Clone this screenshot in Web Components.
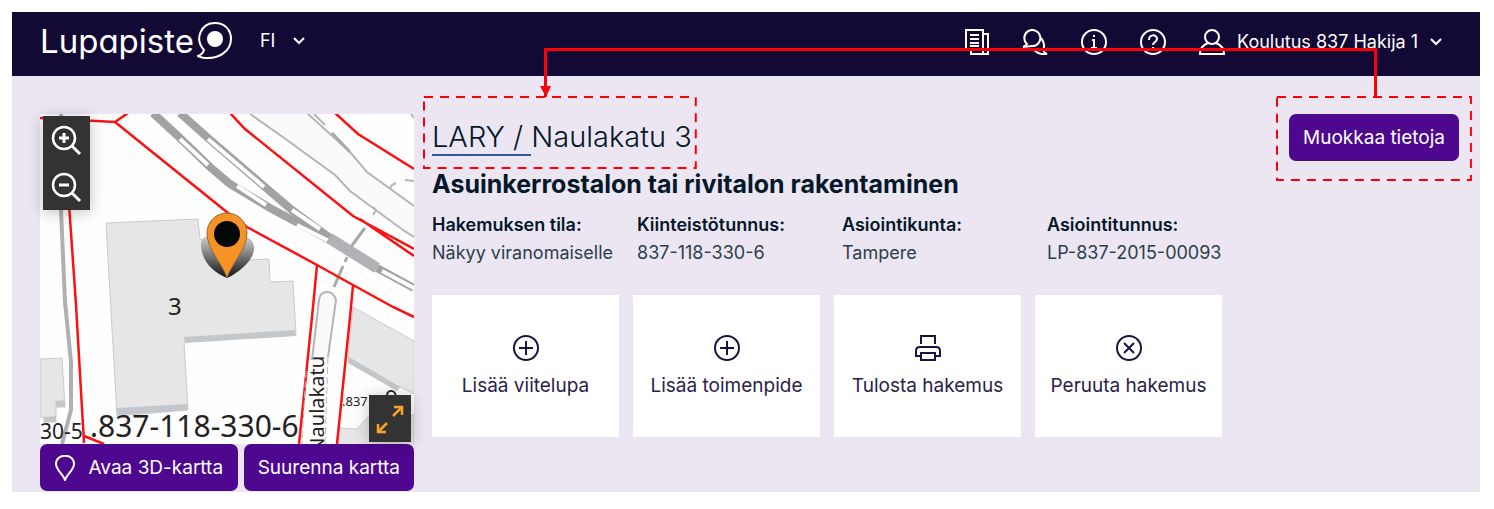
<!DOCTYPE html>
<html lang="fi">
<head>
<meta charset="utf-8">
<title>Lupapiste</title>
<style>
    body {
        margin: 0;
        padding: 12px 14px 18px 12px;
        background: #fff;
        font-family: Inter, "Liberation Sans", sans-serif;
        font-size: 18px;
        line-height: 28px;
        color: #04182a;
        --navy: #120a35;
        --violet: #4e078f;
        --lilac: #ece6f2;
        --mark: #fb0007;
    }
</style>
</head>
<body>
<lp-page></lp-page>

<script>
const define = (name, html) => {
    const template = document.createElement("template");
    template.innerHTML = html;
    customElements.define(name, class extends HTMLElement {
        constructor() {
            super();
            this.attachShadow({ mode: "open" });
            this.shadowRoot.appendChild(template.content.cloneNode(true));
        }
    });
};

const icons = {
    chevron: [12, 8, '<path d="M1 1l5 5 5-5" stroke-width="2"/>'],
    news: [24, 26, '<path d="M1 1h17v20H1zM18 5h5v20H6v-4M18 21v4M5 6h9M5 10h9M5 14h9M5 17h9" stroke-width="2"/>'],
    chat: [26, 26, '<path d="M5 15A8 8 0 1 1 10 17L1 18Q4 17 5 15zM19 9q5 6 2 12 1 3 4 4-8 1-13-4" stroke-width="2"/>'],
    info: [26, 26, '<circle cx="13" cy="13" r="12" stroke-width="2"/><path d="M11 11h2v8M10 19h6M13 6v2" stroke-width="2"/>'],
    help: [26, 26, '<circle cx="13" cy="13" r="12" stroke-width="2"/><path d="M9 11c0-6 8-6 8-1 0 3-4 3-4 6M13 18v2" stroke-width="2"/>'],
    user: [26, 26, '<circle cx="13" cy="8" r="7" stroke-width="2"/><path d="M9 14c-5 2-8 6-8 11h24c0-5-3-9-8-11" stroke-width="2"/>'],
    plus: [26, 26, '<circle cx="13" cy="13" r="12" stroke-width="2"/><path d="M13 6v14M6 13h14" stroke-width="2"/>'],
    cancel: [26, 26, '<circle cx="13" cy="13" r="12" stroke-width="2"/><path d="M8 8l10 10M18 8L8 18" stroke-width="2"/>'],
    print: [26, 26, '<path d="M6 9V1h14v8M6 21H1v-5q0-4 4-4h16q4 0 4 4v5h-5M6 18h14v7H6z" stroke-width="2"/>'],
    pin: [20, 26, '<path d="M10 25C8 19 1 15 1 9c0-11 18-11 18 0 0 6-7 10-9 16z" stroke-width="2"/>'],
    zoomin: [47, 47, '<circle cx="21" cy="22" r="11" stroke-width="2.5"/><path d="M29 30l8 8M21 17v10M16 22h10" stroke-width="3"/>'],
    zoomout: [47, 47, '<circle cx="21" cy="22" r="11" stroke-width="2.5"/><path d="M29 30l8 8M16 22h10" stroke-width="3"/>'],
    expand: [42, 47, '<path d="M24 21l9-9M25 12h8v8M18 28l-9 9M9 29v8h8" stroke-width="2.5"/>']
};

class LpIcon extends HTMLElement {
    constructor() {
        super();
        this.attachShadow({ mode: "open" });
    }
    connectedCallback() {
        const [w, h, body] = icons[this.getAttribute("name")];
        this.shadowRoot.innerHTML = `
            <style>:host { display: inline-flex; flex: none; } svg { fill: none; stroke: currentColor; }</style>
            <svg width="${w}" height="${h}" viewBox="0 0 ${w} ${h}" aria-hidden="true">${body}</svg>`;
    }
}
customElements.define("lp-icon", LpIcon);

define("lp-button", `
<style>
    :host { display: flex; }
    button {
        flex: 1;
        display: flex;
        align-items: center;
        justify-content: center;
        gap: 14px;
        height: 47px;
        padding: 0 14px;
        border: 0;
        border-radius: 7px;
        background: var(--violet);
        color: #fff;
        font: inherit;
        font-size: 19px;
        white-space: nowrap;
        cursor: pointer;
    }
</style>
<button type="button"><slot></slot></button>
`);

define("lp-logo", `
<style>
    :host { display: block; }
    a {
        display: flex;
        gap: 3px;
        color: #fff;
        text-decoration: none;
        font-size: 33px;
        line-height: 40px;
        font-feature-settings: "cv11", "ss03";
    }
    svg { flex: none; }
</style>
<a href="#">Lupapiste
    <svg width="35" height="38" viewBox="0 0 35 38" aria-hidden="true">
        <path d="M7 29C-3 18 4 2 18 2c10 0 16 7 16 16 0 12-12 20-26 19-3 0-5-1-7-2 3-1 5-3 6-6z" fill="none" stroke="#fff" stroke-width="2"/>
        <circle cx="18" cy="18" r="8" fill="#fff"/>
    </svg>
</a>
`);

define("lp-header", `
<style>
    :host {
        display: flex;
        align-items: center;
        justify-content: space-between;
        height: 64px;
        padding: 0 38px 0 28px;
        background: var(--navy);
        color: #fff;
    }
    .side, nav { display: flex; align-items: center; }
    .side { gap: 28px; padding-bottom: 6px; }
    nav { gap: 33px; padding-bottom: 4px; }
    button {
        display: flex;
        align-items: center;
        gap: 12px;
        padding: 0;
        border: 0;
        background: none;
        color: inherit;
        font: inherit;
        cursor: pointer;
    }
    .lang { gap: 18px; }
    a { display: flex; color: inherit; }
</style>
<div class="side">
    <lp-logo></lp-logo>
    <button class="lang" type="button">FI <lp-icon name="chevron"></lp-icon></button>
</div>
<nav>
    <a href="#" aria-label="Uutiset"><lp-icon name="news"></lp-icon></a>
    <a href="#" aria-label="Keskustelu"><lp-icon name="chat"></lp-icon></a>
    <a href="#" aria-label="Tietoa"><lp-icon name="info"></lp-icon></a>
    <a href="#" aria-label="Ohje"><lp-icon name="help"></lp-icon></a>
    <button type="button"><lp-icon name="user"></lp-icon>Koulutus 837 Hakija 1<lp-icon name="chevron"></lp-icon></button>
</nav>
`);

define("lp-map", `
<style>
    :host { display: block; }
    .view { position: relative; height: 330px; background: #fefefe; }
    .map { display: block; width: 100%; height: 100%; font-family: "Noto Sans", sans-serif; }
    .tools {
        position: absolute;
        left: 3px;
        top: 2px;
        display: flex;
        flex-direction: column;
        box-shadow: 0 2px 16px rgba(0, 0, 0, 0.25);
    }
    .expand {
        position: absolute;
        right: 3px;
        bottom: 2px;
        box-shadow: 0 2px 16px rgba(0, 0, 0, 0.25);
    }
    .view button {
        display: flex;
        padding: 0;
        border: 0;
        background: #333;
        color: #fff;
        cursor: pointer;
    }
    .view .expand { color: #f5a32c; }
    .actions { display: flex; gap: 6px; }
    lp-button:first-child { flex: 1; }
</style>
<div class="view">
    <svg class="map" viewBox="0 0 374 330" preserveAspectRatio="xMidYMid slice" fill="none">
        <defs>
            <linearGradient id="shade" x1="0" y1="0" x2="0" y2="1">
                <stop offset="0" stop-color="#ddd"/>
                <stop offset="1" stop-color="#111"/>
            </linearGradient>
        </defs>
        <!-- street areas -->
        <path d="M210 0L247 26 295 61 310 77 333 94 363 116 374 123V92L327 58 310 38 268 0z" fill="#fafafa"/>
        <g stroke="#b5b5b8" stroke-width="2">
            <path d="M210 0L247 26 295 61 310 77 333 94 363 116 374 123M268 0L310 38 327 58 374 92M274 0L285 11M350 75l2-4 4-2M365 66l9 1M333 101l3-5-3-3M371 0l3 4"/>
            <path d="M272 246l7-60q1-8 8-8t9 8l-8 57" fill="#fafafa"/>
        </g>
        <path d="M292 19l18 19M325 114l-15 20M307 143l-2 5M303 152l-9 21" stroke="#a9a9ac" stroke-width="3"/>
        <!-- buildings -->
        <g fill="#e6e6e6" stroke="#c8cacc">
            <path d="M66 109l92-4 2 20 49 21 20-1 1 23 23-1 3 54-112 7 4 68-71 6z"/>
            <path d="M0 245l22-1 3 49h-9v15H4v-5H0z"/>
            <path d="M313 193l61 34v53l-14-7-52-30z"/>
            <path d="M300 314l17 1 13-14h44v30h-78z"/>
        </g>
        <path d="M144 223l111-7 1 6-111 7zM77 294l70-4 1 6-71 5zM308 243l52 30-3 4-49-28zM15 287l10-1v7h-9zM4 303l12-1v6H4z" fill="#c3c7ca"/>
        <!-- railway -->
        <path d="M21 0v96l4 92 6 60v48l-9 34" stroke="#b0b0b4" stroke-width="4"/>
        <path d="M113-1l27 25 30 29 20 17 40 24 60 32M140-1l28 25 57 49 27 23 38 28M337 154l37 20" stroke="#a2a2a3" stroke-width="8"/>
        <path d="M140 25l28 26M197 72l29 19M257 111l32 16M168 25l56 48M252 96l28 19M342 157l34 18" stroke="#fff" stroke-width="4"/>
        <path d="M289 124l48 30" stroke="#b1b1b6" stroke-width="11"/>
        <!-- plot borders -->
        <path d="M0 4l75 4L88-1M75 8l113 91 19 14 70 38 36 20 40 22 21 10M190-1l15 16 108 87 61 33M320 105l54 37M295-1l23 21 56 35M29 90l7 101 8 138M44 322l20 8M277 151l-4 42-14 137M313 171l-2 22-14 137" stroke="#fe1010" stroke-width="2.5"/>
        <path d="M266 257l-4 73M288 243l-3 87" stroke="#bbb" stroke-dasharray="7 3"/>
        <g fill="#222">
            <text x="128" y="201" font-size="24">3</text>
            <text x="0" y="325" font-size="21">30-5</text>
            <text x="50" y="323" font-size="30">.837-118-330-6</text>
            <text x="302" y="292" font-size="13">.837</text>
            <text x="345" y="292" font-size="22">9</text>
            <text transform="translate(284 242) rotate(-90)" text-anchor="end" font-size="20">Naulakatu</text>
        </g>
        <path d="M161 130c0-10 12-10 26-10s27 2 27 14-14 24-27 30c-15-6-26-18-26-34z" fill="url(#shade)"/>
        <path d="M187 164c-4-14-20-28-20-45a20 20 0 0 1 40 0c0 17-16 31-20 45z" fill="#f79326" stroke="#8a6a45"/>
        <circle cx="187" cy="120" r="13" fill="#020806"/>
    </svg>
    <div class="tools">
        <button type="button" aria-label="Lähennä"><lp-icon name="zoomin"></lp-icon></button>
        <button type="button" aria-label="Loitonna"><lp-icon name="zoomout"></lp-icon></button>
    </div>
    <button class="expand" type="button" aria-label="Koko näyttö"><lp-icon name="expand"></lp-icon></button>
</div>
<div class="actions">
    <lp-button><lp-icon name="pin"></lp-icon>Avaa 3D-kartta</lp-button>
    <lp-button>Suurenna kartta</lp-button>
</div>
`);

// dashed frame drawn around whatever is slotted in
define("lp-frame", `
<style>
    :host { display: block; position: relative; width: fit-content; }
    svg {
        position: absolute;
        left: var(--frame-left, -12px);
        top: -17px;
        width: calc(100% + var(--frame-extra, 24px));
        height: calc(100% + var(--frame-tall, 36px));
        overflow: visible;
        pointer-events: none;
    }
    rect { fill: none; stroke: var(--mark); stroke-width: 2; stroke-dasharray: 9 7; }
</style>
<slot></slot>
<svg aria-hidden="true"><rect width="100%" height="100%"/></svg>
`);

define("lp-fact", `
<style>
    :host { display: block; white-space: nowrap; }
    dl, dt, dd { margin: 0; }
    dt { font-weight: 600; }
    dd { color: #2d3d4b; }
</style>
<dl>
    <dt><slot name="label"></slot></dt>
    <dd><slot></slot></dd>
</dl>
`);

define("lp-card", `
<style>
    :host { display: block; }
    button {
        display: flex;
        flex-direction: column;
        align-items: center;
        gap: 11px;
        width: 100%;
        padding: 40px 0 37px;
        border: 0;
        background: #fff;
        color: #2b2148;
        font: inherit;
        font-size: 19px;
        line-height: 28px;
        cursor: pointer;
    }
    ::slotted(lp-icon) { color: #1c1243; }
</style>
<button type="button"><slot name="icon"></slot><span><slot></slot></span></button>
`);

define("lp-application", `
<style>
    :host { display: block; }
    h1, h2 { margin: 0; white-space: nowrap; }
    h1 { font-size: 29px; line-height: 46px; font-weight: 300; }
    h1 a {
        color: inherit;
        text-decoration: none;
        white-space: pre;
        border-bottom: 2px solid #2b57a5;
    }
    h2 { margin-top: 8px; font-size: 25px; line-height: 32px; font-weight: 700; }
    lp-frame { --frame-left: -8px; --frame-extra: 12px; --frame-tall: 25px; }
    .facts, .cards { display: grid; grid-template-columns: repeat(4, 1fr); }
    .facts { max-width: 820px; margin-top: 11px; }
    .cards { max-width: 790px; margin-top: 28px; gap: 14px; }
</style>
<lp-frame><h1><a href="#">LARY / </a>Naulakatu 3</h1></lp-frame>
<h2>Asuinkerrostalon tai rivitalon rakentaminen</h2>
<div class="facts">
    <lp-fact><span slot="label">Hakemuksen tila:</span>Näkyy viranomaiselle</lp-fact>
    <lp-fact><span slot="label">Kiinteistötunnus:</span>837-118-330-6</lp-fact>
    <lp-fact><span slot="label">Asiointikunta:</span>Tampere</lp-fact>
    <lp-fact><span slot="label">Asiointitunnus:</span>LP-837-2015-00093</lp-fact>
</div>
<div class="cards">
    <lp-card><lp-icon slot="icon" name="plus"></lp-icon>Lisää viitelupa</lp-card>
    <lp-card><lp-icon slot="icon" name="plus"></lp-icon>Lisää toimenpide</lp-card>
    <lp-card><lp-icon slot="icon" name="print"></lp-icon>Tulosta hakemus</lp-card>
    <lp-card><lp-icon slot="icon" name="cancel"></lp-icon>Peruuta hakemus</lp-card>
</div>
`);

define("lp-page", `
<style>
    :host { display: block; position: relative; background: var(--lilac); }
    main {
        display: grid;
        grid-template-columns: minmax(260px, 374px) 1fr auto;
        align-items: start;
        column-gap: 18px;
        padding: 38px 21px 1px 28px;
    }
    /* connector between the two frames */
    .arrow {
        position: absolute;
        left: 532px;
        right: 103px;
        top: 36px;
        height: 46px;
        border: 3px solid var(--mark);
        border-bottom: 0;
        pointer-events: none;
    }
    .arrow svg { position: absolute; left: -7px; bottom: 0; }
</style>
<lp-header></lp-header>
<main>
    <lp-map></lp-map>
    <lp-application></lp-application>
    <lp-frame><lp-button>Muokkaa tietoja</lp-button></lp-frame>
</main>
<div class="arrow"><svg width="11" height="11" viewBox="0 0 11 11" aria-hidden="true"><path d="M0 0h11L6 11z" fill="#fb0007"/></svg></div>
`);
</script>
</body>
</html>
